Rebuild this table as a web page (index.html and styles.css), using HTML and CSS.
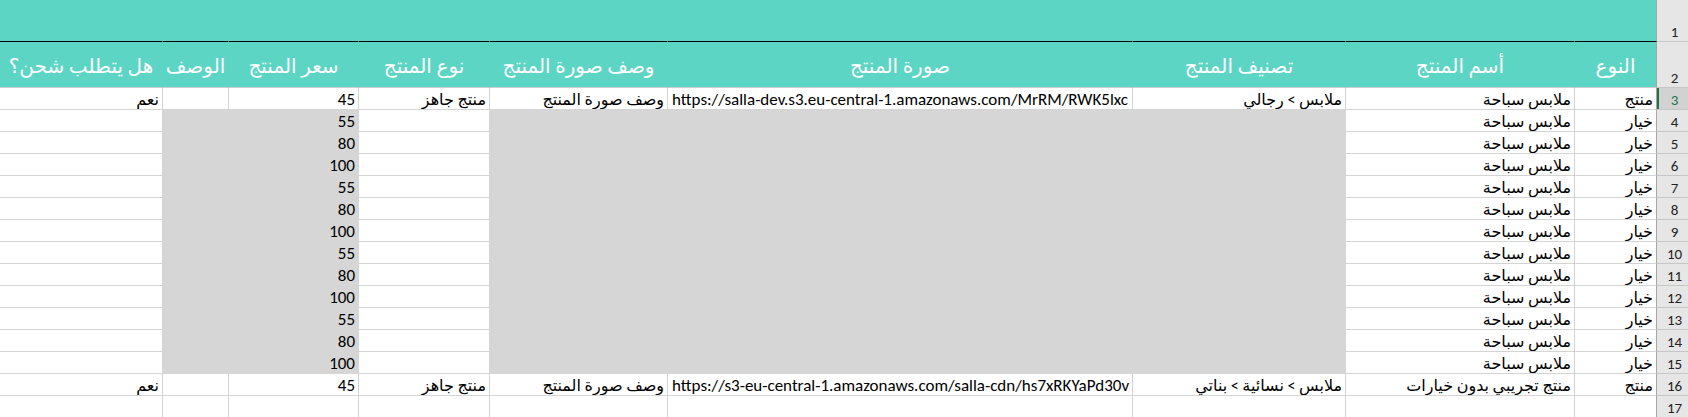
FILE: index.html
```html
<!DOCTYPE html>
<html lang="ar">
<head>
<meta charset="utf-8">
<title>Sheet</title>
<link rel="stylesheet" href="styles.css">
</head>
<body>
<div class="sheet">
  <div class="row r1">
    <div class="cell rh">1</div>
    <div class="cell t ci"></div><div class="cell t"></div><div class="cell t"></div><div class="cell t"></div><div class="cell t"></div><div class="cell t"></div><div class="cell t"></div><div class="cell t"></div><div class="cell t"></div>
  </div>
  <div class="row r2">
    <div class="cell rh">2</div>
    <div class="cell t h ci">النوع</div>
    <div class="cell t h">أسم المنتج</div>
    <div class="cell t h">تصنيف المنتج</div>
    <div class="cell t h">صورة المنتج</div>
    <div class="cell t h">وصف صورة المنتج</div>
    <div class="cell t h">نوع المنتج</div>
    <div class="cell t h">سعر المنتج</div>
    <div class="cell t h">الوصف</div>
    <div class="cell t h">هل يتطلب شحن؟</div>
  </div>
  <div class="row">
    <div class="cell rh sel">3</div>
    <div class="cell ci ar">منتج</div>
    <div class="cell ar">ملابس سباحة</div>
    <div class="cell ar">ملابس &gt; رجالي</div>
    <div class="cell url">https://salla-dev.s3.eu-central-1.amazonaws.com/MrRM/RWK5lxc</div>
    <div class="cell ar">وصف صورة المنتج</div>
    <div class="cell ar">منتج جاهز</div>
    <div class="cell num">45</div>
    <div class="cell"></div>
    <div class="cell ar">نعم</div>
  </div>
  <div class="row"><div class="cell rh">4</div><div class="cell ci ar">خيار</div><div class="cell ar">ملابس سباحة</div><div class="cell f"></div><div class="cell f"></div><div class="cell f"></div><div class="cell"></div><div class="cell f num">55</div><div class="cell f"></div><div class="cell"></div></div>
  <div class="row"><div class="cell rh">5</div><div class="cell ci ar">خيار</div><div class="cell ar">ملابس سباحة</div><div class="cell f"></div><div class="cell f"></div><div class="cell f"></div><div class="cell"></div><div class="cell f num">80</div><div class="cell f"></div><div class="cell"></div></div>
  <div class="row"><div class="cell rh">6</div><div class="cell ci ar">خيار</div><div class="cell ar">ملابس سباحة</div><div class="cell f"></div><div class="cell f"></div><div class="cell f"></div><div class="cell"></div><div class="cell f num">100</div><div class="cell f"></div><div class="cell"></div></div>
  <div class="row"><div class="cell rh">7</div><div class="cell ci ar">خيار</div><div class="cell ar">ملابس سباحة</div><div class="cell f"></div><div class="cell f"></div><div class="cell f"></div><div class="cell"></div><div class="cell f num">55</div><div class="cell f"></div><div class="cell"></div></div>
  <div class="row"><div class="cell rh">8</div><div class="cell ci ar">خيار</div><div class="cell ar">ملابس سباحة</div><div class="cell f"></div><div class="cell f"></div><div class="cell f"></div><div class="cell"></div><div class="cell f num">80</div><div class="cell f"></div><div class="cell"></div></div>
  <div class="row"><div class="cell rh">9</div><div class="cell ci ar">خيار</div><div class="cell ar">ملابس سباحة</div><div class="cell f"></div><div class="cell f"></div><div class="cell f"></div><div class="cell"></div><div class="cell f num">100</div><div class="cell f"></div><div class="cell"></div></div>
  <div class="row"><div class="cell rh">10</div><div class="cell ci ar">خيار</div><div class="cell ar">ملابس سباحة</div><div class="cell f"></div><div class="cell f"></div><div class="cell f"></div><div class="cell"></div><div class="cell f num">55</div><div class="cell f"></div><div class="cell"></div></div>
  <div class="row"><div class="cell rh">11</div><div class="cell ci ar">خيار</div><div class="cell ar">ملابس سباحة</div><div class="cell f"></div><div class="cell f"></div><div class="cell f"></div><div class="cell"></div><div class="cell f num">80</div><div class="cell f"></div><div class="cell"></div></div>
  <div class="row"><div class="cell rh">12</div><div class="cell ci ar">خيار</div><div class="cell ar">ملابس سباحة</div><div class="cell f"></div><div class="cell f"></div><div class="cell f"></div><div class="cell"></div><div class="cell f num">100</div><div class="cell f"></div><div class="cell"></div></div>
  <div class="row"><div class="cell rh">13</div><div class="cell ci ar">خيار</div><div class="cell ar">ملابس سباحة</div><div class="cell f"></div><div class="cell f"></div><div class="cell f"></div><div class="cell"></div><div class="cell f num">55</div><div class="cell f"></div><div class="cell"></div></div>
  <div class="row"><div class="cell rh">14</div><div class="cell ci ar">خيار</div><div class="cell ar">ملابس سباحة</div><div class="cell f"></div><div class="cell f"></div><div class="cell f"></div><div class="cell"></div><div class="cell f num">80</div><div class="cell f"></div><div class="cell"></div></div>
  <div class="row"><div class="cell rh">15</div><div class="cell ci ar">خيار</div><div class="cell ar">ملابس سباحة</div><div class="cell f"></div><div class="cell f"></div><div class="cell f"></div><div class="cell"></div><div class="cell f num">100</div><div class="cell f"></div><div class="cell"></div></div>
  <div class="row">
    <div class="cell rh">16</div>
    <div class="cell ci ar">منتج</div>
    <div class="cell ar">منتج تجريبي بدون خيارات</div>
    <div class="cell ar">ملابس &gt; نسائية &gt; بناتي</div>
    <div class="cell url">https://s3-eu-central-1.amazonaws.com/salla-cdn/hs7xRKYaPd30v</div>
    <div class="cell ar">وصف صورة المنتج</div>
    <div class="cell ar">منتج جاهز</div>
    <div class="cell num">45</div>
    <div class="cell"></div>
    <div class="cell ar">نعم</div>
  </div>
  <div class="row"><div class="cell rh">17</div><div class="cell ci"></div><div class="cell"></div><div class="cell"></div><div class="cell"></div><div class="cell"></div><div class="cell"></div><div class="cell"></div><div class="cell"></div><div class="cell"></div></div>
</div>
</body>
</html>
```
FILE: styles.css
```css
* { box-sizing: border-box; }
html, body { margin: 0; padding: 0; background: #ffffff; overflow: hidden; }
body { font-family: Carlito, "Liberation Sans", "DejaVu Sans", sans-serif; color: #000; }
.sheet { width: 1688px; }
.row {
  display: grid;
  grid-template-columns: 31px 82px 229px 213px 465px 178px 131px 130px 66px 163px;
  direction: rtl;
  height: 22px;
}
.r1 { height: 42px; }
.r2 { height: 46px; }
.cell {
  display: flex;
  align-items: flex-end;
  justify-content: flex-start;
  overflow: hidden;
  white-space: nowrap;
  border-right: 1px solid #d4d4d4;
  border-bottom: 1px solid #d4d4d4;
  padding: 0 3px 0 3px;
  font-size: 17px;
  line-height: 19px;
}
.ar { font-size: 16px; }
.url { direction: ltr; padding-left: 4px; padding-right: 0; }
.ci { border-right-color: #a6a6a6; }
.t { background: #5dd5c5; border-right-color: #5dd5c5; }
.t.ci { border-right-color: #a6a6a6; }
.r1 .t { border-bottom-color: #000; }
.r2 .t { border-bottom-color: #cdcdcd; }
.h { justify-content: center; color: #fff; font-size: 20px; line-height: 24px; padding-bottom: 9px; }
.f { background: #d6d6d6; border-right-color: #d6d6d6; border-bottom-color: #d6d6d6; }
.rh {
  border-right: none;
  background: #e6e6e6;
  border-bottom-color: #c6c6c6;
  justify-content: center;
  padding: 0 0 0 4px;
  font-size: 15px;
  line-height: 18px;
  color: #222;
}
.rh.sel { background: #d2d2d2; color: #217346; box-shadow: inset 2px 0 0 #217346; }
```
